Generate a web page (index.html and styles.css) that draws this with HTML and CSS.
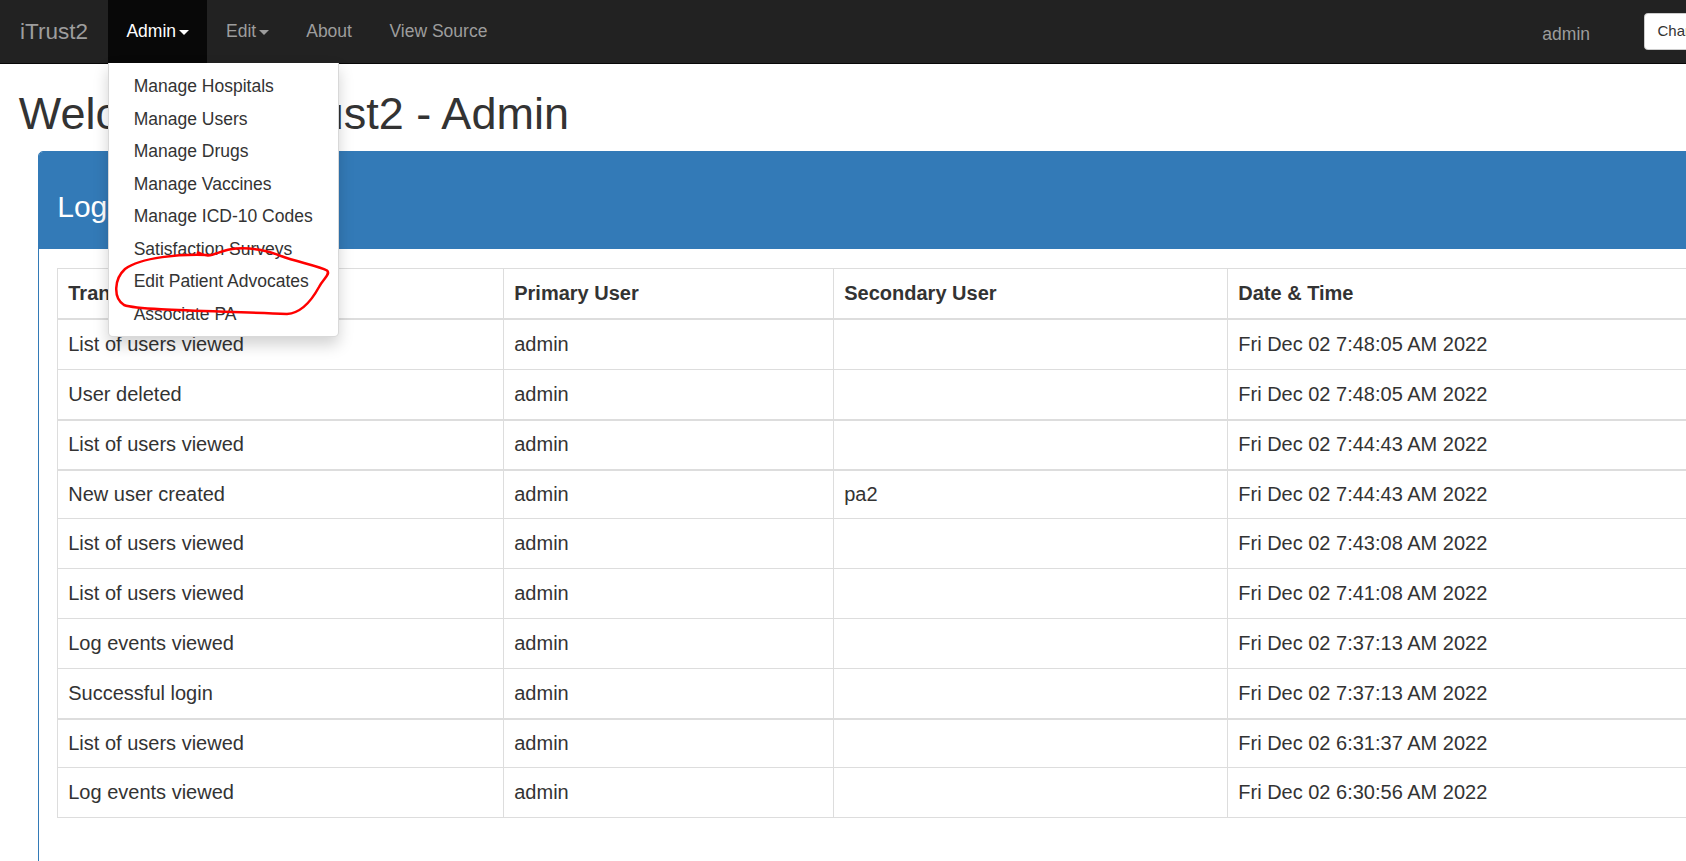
FILE: index.html
```html
<!DOCTYPE html>
<html lang="en">
<head>
<meta charset="utf-8">
<title>iTrust2</title>
<link rel="stylesheet" href="styles.css">
</head>
<body>
<div class="page">
  <nav class="navbar">
    <a class="brand">iTrust2</a>
    <ul class="nav">
      <li class="dropdown">
        <a class="nav-link active">Admin<span class="caret"></span></a>
        <ul class="dropdown-menu">
          <li><a>Manage Hospitals</a></li>
          <li><a>Manage Users</a></li>
          <li><a>Manage Drugs</a></li>
          <li><a>Manage Vaccines</a></li>
          <li><a>Manage ICD-10 Codes</a></li>
          <li><a>Satisfaction Surveys</a></li>
          <li><a>Edit Patient Advocates</a></li>
          <li><a>Associate PA</a></li>
        </ul>
      </li>
      <li><a class="nav-link">Edit<span class="caret"></span></a></li>
      <li><a class="nav-link">About</a></li>
      <li><a class="nav-link">View Source</a></li>
    </ul>
    <div class="nav-right">
      <span class="navbar-text">admin</span>
      <button class="btn">Change Password</button>
      <button class="btn btn-gap">Logout</button>
    </div>
  </nav>

  <main class="content">
    <h1 class="title">Welcome to iTrust2 - Admin</h1>
    <section class="panel">
      <div class="panel-heading"><h3 class="panel-title">Log Events</h3></div>
      <div class="panel-body">
        <table class="log-table">
          <colgroup>
            <col class="col-type">
            <col class="col-primary">
            <col class="col-secondary">
            <col>
          </colgroup>
          <thead>
            <tr><th>Transaction Type</th><th>Primary User</th><th>Secondary User</th><th>Date &amp; Time</th></tr>
          </thead>
          <tbody>
            <tr><td>List of users viewed</td><td>admin</td><td></td><td>Fri Dec 02 7:48:05 AM 2022</td></tr>
            <tr><td>User deleted</td><td>admin</td><td></td><td>Fri Dec 02 7:48:05 AM 2022</td></tr>
            <tr class="group-start"><td>List of users viewed</td><td>admin</td><td></td><td>Fri Dec 02 7:44:43 AM 2022</td></tr>
            <tr class="group-start"><td>New user created</td><td>admin</td><td>pa2</td><td>Fri Dec 02 7:44:43 AM 2022</td></tr>
            <tr><td>List of users viewed</td><td>admin</td><td></td><td>Fri Dec 02 7:43:08 AM 2022</td></tr>
            <tr><td>List of users viewed</td><td>admin</td><td></td><td>Fri Dec 02 7:41:08 AM 2022</td></tr>
            <tr><td>Log events viewed</td><td>admin</td><td></td><td>Fri Dec 02 7:37:13 AM 2022</td></tr>
            <tr><td>Successful login</td><td>admin</td><td></td><td>Fri Dec 02 7:37:13 AM 2022</td></tr>
            <tr class="group-start"><td>List of users viewed</td><td>admin</td><td></td><td>Fri Dec 02 6:31:37 AM 2022</td></tr>
            <tr><td>Log events viewed</td><td>admin</td><td></td><td>Fri Dec 02 6:30:56 AM 2022</td></tr>
          </tbody>
        </table>
      </div>
    </section>
  </main>

  <svg class="annotation" width="400" height="360" viewBox="0 0 400 360" aria-hidden="true">
    <path d="M207 255 C181 254, 141 257, 125 269 C114 279, 113 298, 124 305 C140 311, 230 311, 287 314 C302 313, 313 298, 319 287 C323 279, 331 274, 327 270.5 C319 266, 297 262, 281 256 C269 251, 251 247, 236 248.5 C223 249.5, 216 255, 208 255.5 C204 255.5, 201 253.5, 198 252.5" />
  </svg>
</div>
</body>
</html>
```

FILE: styles.css
```css
html, body {
  margin: 0;
  padding: 0;
  overflow: hidden;
}

body {
  font-family: "Liberation Sans", Arial, Helvetica, sans-serif;
  font-size: 17.5px;
  line-height: 1.42857;
  color: #333;
  background: #fff;
}

.page {
  position: relative;
  width: 1900px;
}

/* ---------- Navbar ---------- */
.navbar {
  display: flex;
  align-items: flex-start;
  height: 62.5px;
  background: #222;
  border-bottom: 1px solid #080808;
}

.brand {
  display: block;
  padding: 18.75px 19.75px 18.75px 20px;
  font-size: 22.5px;
  line-height: 25px;
  color: #9d9d9d;
}

.nav {
  display: flex;
  list-style: none;
  margin: 0;
  padding: 0;
}

.nav > li {
  position: relative;
}

.nav-link {
  display: block;
  padding: 18.75px;
  line-height: 25px;
  color: #9d9d9d;
}

.nav-link.active {
  color: #fff;
  background: #080808;
}

.caret {
  display: inline-block;
  width: 0;
  height: 0;
  margin-left: 2.5px;
  vertical-align: middle;
  border-top: 5px solid;
  border-left: 5px solid transparent;
  border-right: 5px solid transparent;
}

.dropdown-menu {
  position: absolute;
  top: 100%;
  left: 0;
  z-index: 1000;
  min-width: 200px;
  margin: 0;
  padding: 8px 0 5.5px;
  list-style: none;
  background: #fff;
  border: 1px solid rgba(0, 0, 0, 0.15);
  border-top: 0;
  border-radius: 0 0 5px 5px;
  box-shadow: 0 7.5px 15px rgba(0, 0, 0, 0.175);
}

.dropdown-menu a {
  display: block;
  padding: 3.75px 25px;
  line-height: 25px;
  color: #333;
  white-space: nowrap;
}

.nav-right {
  display: flex;
  align-items: flex-start;
  margin-left: auto;
  padding-right: 21px;
}

.navbar-text {
  padding-top: 21.5px;
  line-height: 25px;
  color: #9d9d9d;
  margin-right: 54px;
}

.btn {
  margin-top: 12.5px;
  padding: 6.25px 12.5px;
  font-family: inherit;
  font-size: 15px;
  line-height: 22.5px;
  color: #333;
  background: #fff;
  border: 1px solid #ccc;
  border-radius: 3.75px;
}

.btn-gap {
  margin-left: 12.5px;
}

/* ---------- Content ---------- */
.content {
  padding: 0 18.75px;
}

.title {
  margin: 25px 0 12.5px;
  font-size: 45px;
  font-weight: 500;
  line-height: 1.1;
}

.panel {
  margin: 0 18.75px 25px;
  background: #fff;
  border: 1px solid #337ab7;
  border-radius: 5px;
}

.panel-heading {
  padding: 12.5px 18.75px;
  color: #fff;
  background: #337ab7;
  border-bottom: 1px solid #337ab7;
  border-radius: 4px 4px 0 0;
}

.panel-title {
  margin: 25.5px 0 12.5px;
  font-size: 30px;
  font-weight: 500;
  line-height: 1.1;
}

.panel-body {
  padding: 19.75px 18.75px 18.75px;
}

.log-table {
  width: 100%;
  table-layout: fixed;
  border-collapse: collapse;
  border: 1px solid #ddd;
  font-size: 20px;
  line-height: 28.82px;
  margin-bottom: 30px;
}

.col-type { width: 446px; }
.col-primary { width: 330px; }
.col-secondary { width: 394px; }

.log-table th,
.log-table td {
  padding: 10px;
  text-align: left;
  vertical-align: top;
  border: 1px solid #ddd;
}

.log-table thead th {
  font-weight: bold;
  border-bottom: 2px solid #ddd;
}

.log-table .group-start td {
  box-shadow: inset 0 1px 0 #ddd;
}

/* ---------- Red hand-drawn annotation ---------- */
.annotation {
  position: absolute;
  left: 0;
  top: 0;
  z-index: 2000;
  pointer-events: none;
}

.annotation path {
  fill: none;
  stroke: #f00;
  stroke-width: 2.5;
  stroke-linecap: round;
  stroke-linejoin: round;
}
```
